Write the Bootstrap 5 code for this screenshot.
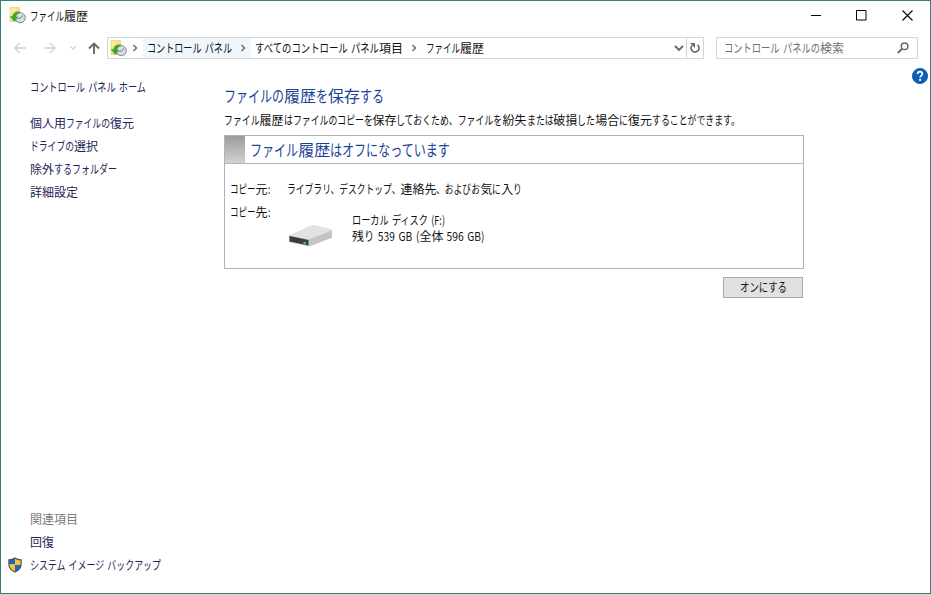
<!DOCTYPE html>
<html lang="ja">
<head>
<meta charset="utf-8">
<title>ファイル履歴</title>
<link href="https://cdn.jsdelivr.net/npm/bootstrap@5.3.0/dist/css/bootstrap.min.css" rel="stylesheet">
<style>
html,body{height:100%}
body{font-family:"Noto Sans CJK JP","Open Sans",sans-serif;font-size:12px;line-height:16px;color:#111;background:#fff;overflow:hidden}
svg{display:block;flex:none}
a{text-decoration:none;color:inherit}
.win{height:594px;border:1px solid #2f8577}
.fit{display:block;white-space:nowrap;word-spacing:1.5px}
.fit .kana{display:inline-block;transform-origin:0 50%;white-space:pre}
.titlebar{height:29px;padding:0 17px 0 8px}
.caption{gap:35px}
.toolbar-row{height:22px;margin-top:7px;padding:0 12px}
.address{width:597px;height:22px;border:1px solid #d4d4d4;margin-left:6px}
.crumb-hot{background:#f0f7fc;width:108px;height:20px;padding-left:4px}
.search{width:202px;height:22px;border:1px solid #d4d4d4;margin-left:12px;color:#707070;padding:0 8px 0 7px}
.refresh{width:17px;height:20px;border-left:1px solid #d4d4d4}
.content{height:534px}
.side{width:223px;padding:20px 0 0 29px;color:#1c2356}
.side .fit{margin-bottom:7px}
.side .home{margin-bottom:20px}
.side .related{color:#7b7b7b}
.bottom{padding-bottom:20px}
.shield-row{margin-left:-23px;gap:7px}
.side .shield-row .fit{margin:0}
.main{width:580px;padding-top:24px}
.head{font-size:16px;line-height:24px;color:#1c4496}
.desc{margin-top:5px}
.panel{height:134px;border:1px solid #b3b0c2;margin-top:7px}
.panel-head{height:28px;border-bottom:1px solid #b3b0c2;gap:5px}
.panel-head .head{padding-bottom:2px}
.swatch{width:20px;height:27px;background:linear-gradient(#9b9b9b,#d2d2d2)}
.panel-body{padding:17px 0 0 5px}
.lbl{width:57px}
.target-row{margin-top:7px}
.disk{margin:20px 18px 0 0}
.disk-text{padding-top:8px}
.disk-text .fit{line-height:16px}
.turn-on{width:80px;height:21px;border:1px solid #a9a9a9;background:#e1e1e1;border-radius:0;padding:0;font-size:12px;line-height:16px;color:#111;margin:8px 1px 0 0}
.turn-on .fit{position:relative;top:-1px}
.help{padding:9px 2px 0 0}
</style>
</head>
<body>
<svg width="0" height="0" class="position-absolute">
<defs>
<linearGradient id="fold" x1="0" y1="0" x2="1" y2="1"><stop offset="0" stop-color="#fff0ae"/><stop offset="1" stop-color="#f0cf62"/></linearGradient>
<symbol id="history" viewBox="0 0 17 17">
<path d="M1 0.500h9.500v14H1z" fill="url(#fold)" stroke="#e5c665" stroke-width=".6"/>
<circle cx="11.300" cy="10.700" r="5" fill="#d9dfe6" stroke="#7c8189"/>
<path d="M9 11.500l2.300-.500 2.700-2.500" stroke="#6d727a" fill="none"/>
<path d="M11 5C6.800 4.300 4 6.300 3.600 9.500L1.200 9.500L5.500 14.500L8.800 10L6.800 9.700C7 7.800 8.500 6.500 11 5z" fill="#35ab35" stroke="#258b2b" stroke-width=".4"/>
</symbol>
</defs>
</svg>
<div class="win d-flex flex-column">
<header class="titlebar d-flex align-items-center justify-content-between">
<div class="d-flex align-items-center gap-1"><svg width="17" height="17"><use href="#history"/></svg><span class="fit" data-w="58">ファイル履歴</span></div>
<div class="caption d-flex align-items-center">
<svg width="10" height="11"><path d="M0 5.500h10" stroke="#000"/></svg>
<svg width="11" height="11"><path d="M.5.5h9.500v9.500H.5z" fill="none" stroke="#000"/></svg>
<svg width="11" height="11"><path d="M.5.5l10 10M10.500.5l-10 10" stroke="#000" stroke-width="1.100"/></svg>
</div>
</header>
<div class="toolbar-row d-flex align-items-center">
<svg width="88" height="14" fill="none"><path d="M13 7H2M6.500 2L1.800 7l4.700 5M31 7h11M37 2l5 5-5 5" stroke="#d2d2d2" stroke-width="1.400"/><path d="M57.500 5.500l2.500 2.500 2.500-2.500" stroke="#cfcfcf" stroke-width="1.300"/><path d="M81 13V2.500M76 7.500l5-5 5 5" stroke="#666" stroke-width="1.900"/></svg>
<div class="address d-flex align-items-center">
<svg width="17" height="17" style="margin-left:2px"><use href="#history"/></svg>
<svg width="16" height="8" fill="none"><path d="M6.500 1l3 3-3 3" stroke="#666" stroke-width="1.400"/></svg>
<div class="crumb-hot d-flex align-items-center"><span class="fit" data-w="85">コントロール パネル</span><svg width="16" height="8" fill="none" class="ms-1"><path d="M5.500 1l3 3-3 3" stroke="#666" stroke-width="1.400"/></svg></div>
<span class="fit ms-1" data-w="148">すべてのコントロール パネル項目</span>
<svg width="23" height="8" fill="none"><path d="M9.500 1l3 3-3 3" stroke="#666" stroke-width="1.400"/></svg>
<span class="fit" data-w="58">ファイル履歴</span>
<svg width="10" height="7" class="ms-auto" style="margin-right:2px" fill="none"><path d="M1 1l4 4 4-4" stroke="#666" stroke-width="1.900"/></svg>
<div class="refresh d-flex align-items-center justify-content-center"><svg width="12" height="12" fill="none"><path d="M8.500 2.900A4 4 0 1 1 3 3.500" stroke="#666" stroke-width="1.600"/><path d="M1 1h5v5z" fill="#666"/></svg></div>
</div>
<div class="search d-flex align-items-center justify-content-between"><span class="fit" data-w="120">コントロール パネルの検索</span><svg width="12" height="12" fill="none" stroke="#6a6a6a"><circle cx="7.600" cy="4.300" r="3.300" stroke-width="1.500"/><path d="M5.200 6.700L.8 11" stroke-width="1.900"/></svg></div>
</div>
<div class="content d-flex">
<nav class="side d-flex flex-column">
<a class="fit home" data-w="116">コントロール パネル ホーム</a>
<a class="fit" data-w="104">個人用ファイルの復元</a>
<a class="fit" data-w="68">ドライブの選択</a>
<a class="fit" data-w="87">除外するフォルダー</a>
<a class="fit" data-w="48">詳細設定</a>
<div class="mt-auto bottom">
<span class="fit related" data-w="47">関連項目</span>
<a class="fit" data-w="24">回復</a>
<a class="shield-row d-flex align-items-center">
<svg width="16" height="16" viewBox="0 0 16 17"><defs><clipPath id="sh"><path d="M8 1c2 1.500 4 2 6.500 2v5c0 4-3 6.500-6.500 8C4.500 14.500 1.500 12 1.500 8V3C4 3 6 2.500 8 1z"/></clipPath></defs><g clip-path="url(#sh)"><path d="M0 0h8v8H0zM8 8h8v9H8z" fill="#1c69b5"/><path d="M8 0h8v8H8zM0 8h8v9H0z" fill="#f8c130"/></g><path d="M8 1c2 1.500 4 2 6.500 2v5c0 4-3 6.500-6.500 8C4.500 14.500 1.500 12 1.500 8V3C4 3 6 2.500 8 1z" fill="none" stroke="#4b4f55" stroke-width="1.200"/></svg>
<span class="fit" data-w="131">システム イメージ バックアップ</span></a>
</div>
</nav>
<main class="main">
<h1 class="fit head m-0 fw-normal" data-w="160">ファイルの履歴を保存する</h1>
<p class="fit desc mb-0" data-w="516">ファイル履歴はファイルのコピーを保存しておくため、ファイルを紛失または破損した場合に復元することができます。</p>
<section class="panel">
<div class="panel-head d-flex align-items-center"><div class="swatch"></div><h2 class="fit head m-0 fw-normal" data-w="200">ファイル履歴はオフになっています</h2></div>
<div class="panel-body">
<div class="d-flex"><div class="lbl"><span class="fit" data-w="40">コピー元:</span></div><span class="fit" data-w="235">ライブラリ、デスクトップ、連絡先、およびお気に入り</span></div>
<div class="target-row d-flex align-items-start"><div class="lbl"><span class="fit" data-w="40">コピー先:</span></div>
<svg class="disk" width="47" height="24" viewBox="0 0 47 24"><path d="M2 11.500L25 1.500Q26 1 27 1.300L44 5.500Q45 6 45 7v6.500L22 22.500 2 18z" fill="#c9c9ce"/><path d="M2 11.500L25 1.500Q26 1 27 1.300L44 5.500Q45 6 44 7L22 15.500z" fill="#e2e2e5"/><path d="M22 15.500l23-9v7l-23 9z" fill="#c3c3c9"/><path d="M2.500 12l19 4v5.500L2.500 17.500z" fill="#3a3c40"/><path d="M16.500 17.500l2.500.5v2.500L16.500 20z" fill="#48c34b"/></svg>
<div class="disk-text"><span class="fit" data-w="93">ローカル ディスク (F:)</span><span class="fit" data-w="133">残り 539 GB (全体 596 GB)</span></div></div>
</div>
</section>
<div class="text-end"><button class="btn turn-on"><span class="fit d-inline-block" data-w="47">オンにする</span></button></div>
</main>
<aside class="help ms-auto"><svg width="16" height="16" viewBox="0 0 16 16"><circle cx="8" cy="8" r="7.600" fill="#0a61b8" stroke="#084d94" stroke-width=".8"/><path d="M5.600 6C5.700 2.900 10.400 3 10.400 5.800c0 1.900-2.300 1.900-2.300 3.800" fill="none" stroke="#fff" stroke-width="1.700"/><circle cx="8.100" cy="11.900" r="1.100" fill="#fff"/></svg></aside>
</div>
</div>
<script src="https://cdn.jsdelivr.net/npm/bootstrap@5.3.0/dist/js/bootstrap.bundle.min.js"></script>
<script>
document.querySelectorAll('.fit').forEach(el => {
  const target = +el.dataset.w;
  const runs = el.textContent.match(/[\u4e00-\u9fff]+|[^\u4e00-\u9fff]+/g);
  el.textContent = '';
  let kanji = 0, kana = 0;
  const spans = runs.map(t => {
    const s = document.createElement('span');
    s.textContent = t;
    const isKanji = /[\u4e00-\u9fff]/.test(t);
    if (!isKanji) s.className = 'kana';
    el.append(s);
    const w = s.getBoundingClientRect().width;
    if (isKanji) kanji += w; else kana += w;
    return {s, w, isKanji};
  });
  if (!kana) return;
  const k = (target - kanji) / kana;
  spans.forEach(o => {
    if (o.isKanji) return;
    o.s.style.transform = `scaleX(${k})`;
    o.s.style.marginRight = `${o.w * (k - 1)}px`;
  });
  el.style.width = target + 'px';
});
</script>
</body>
</html>
